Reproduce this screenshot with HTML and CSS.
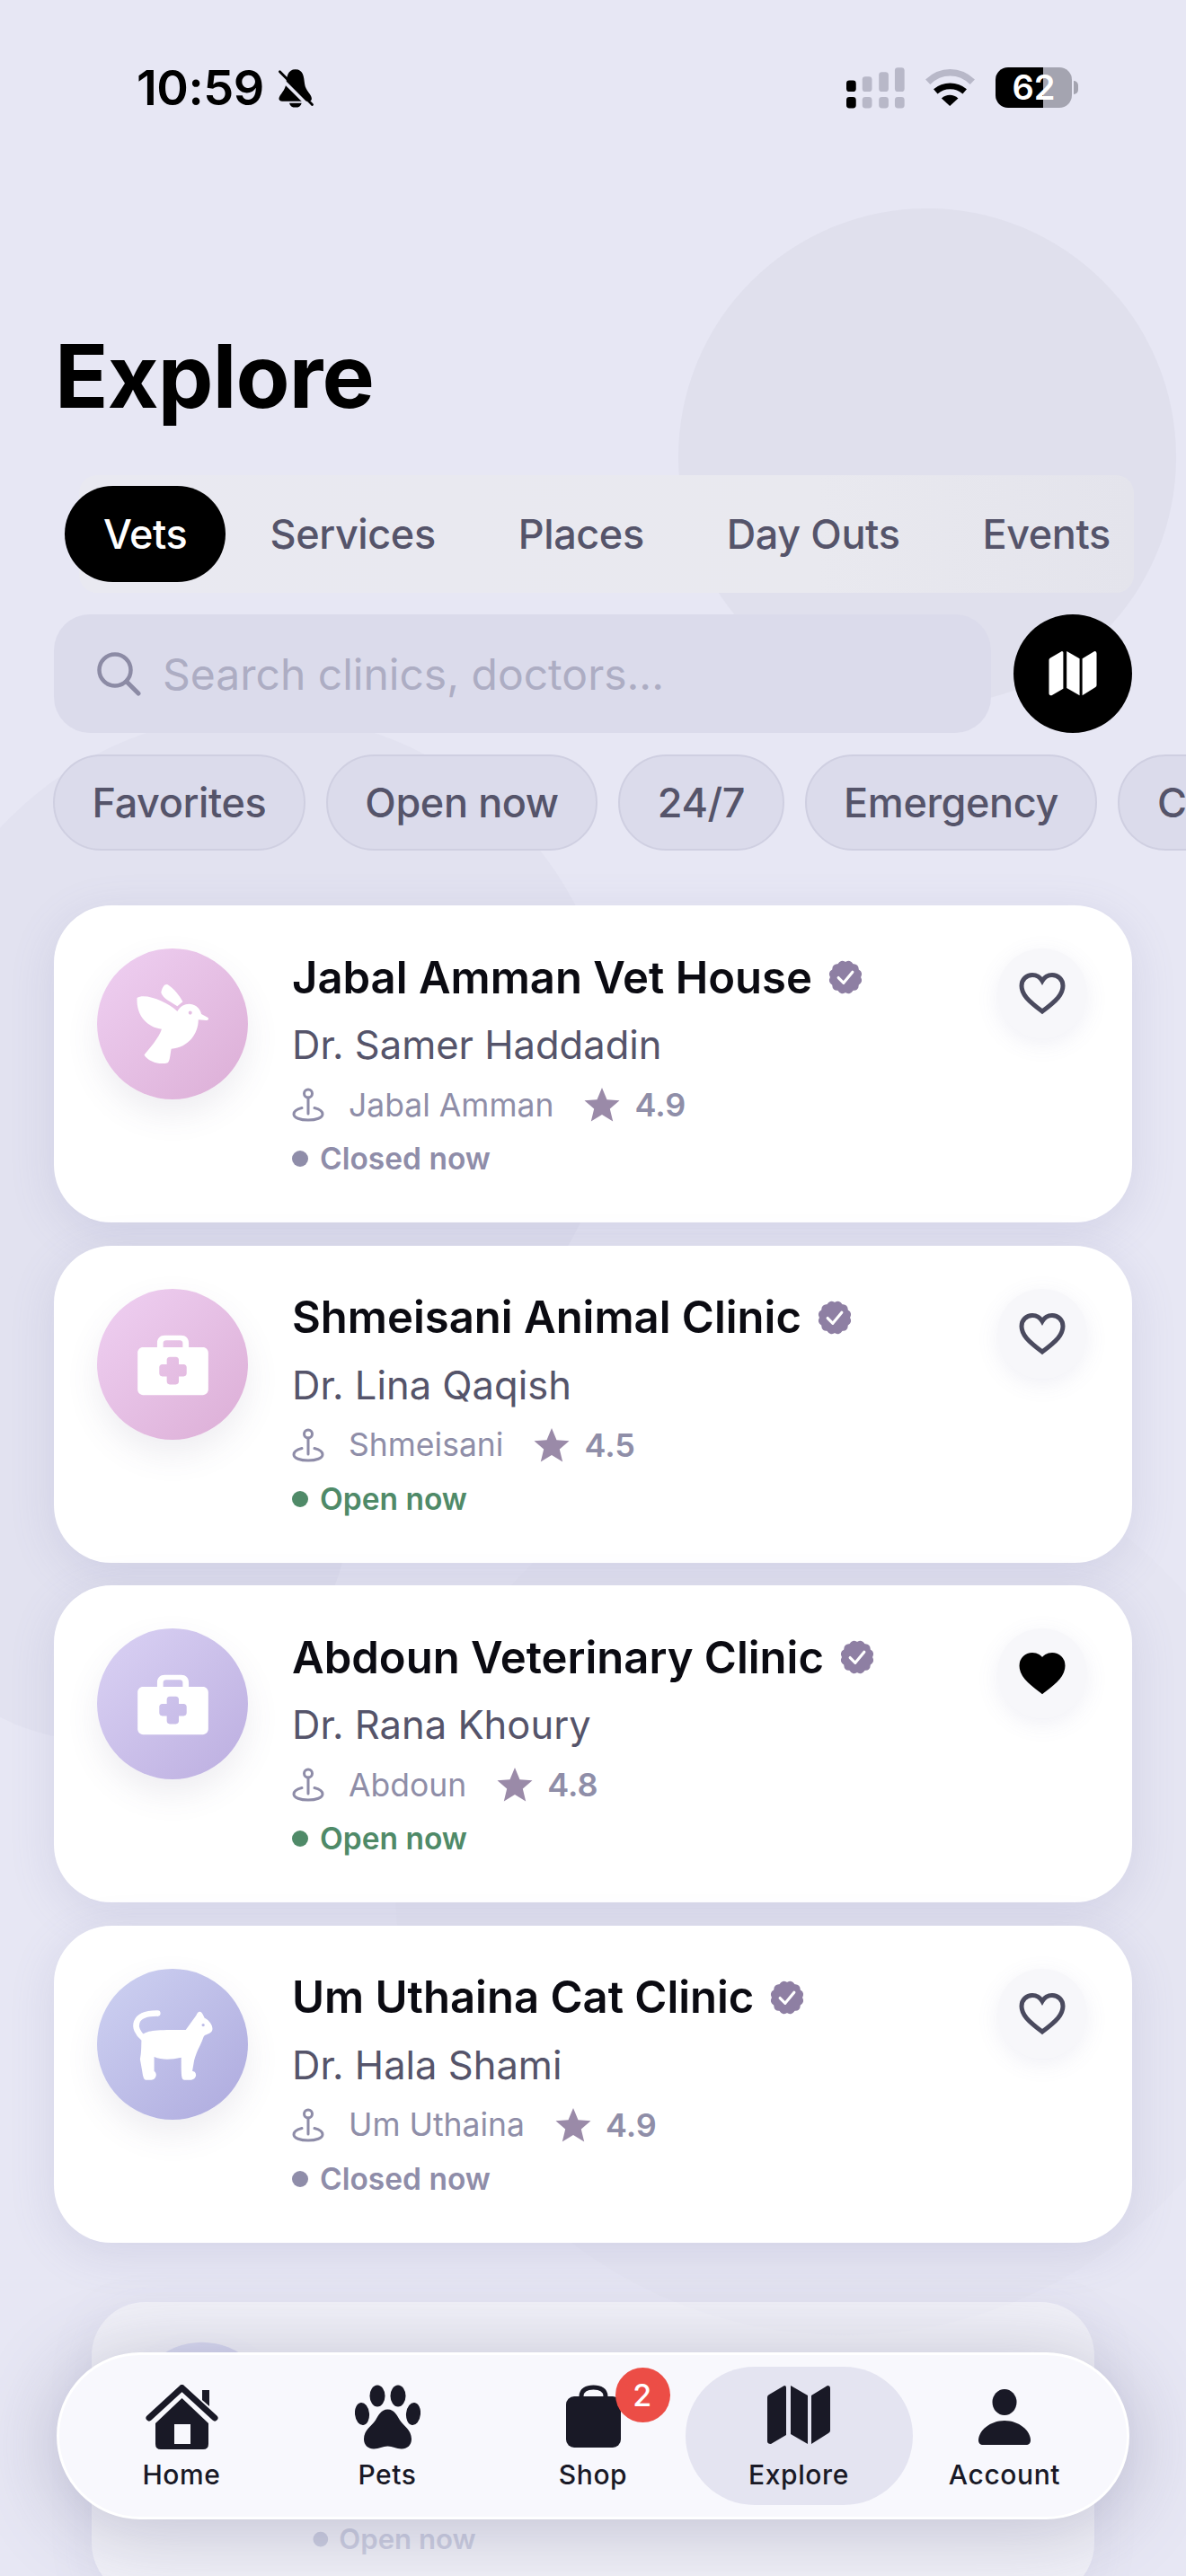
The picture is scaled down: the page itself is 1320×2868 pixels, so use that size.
FILE: index.html
```html
<!DOCTYPE html>
<html lang="en">
<head>
    <meta charset="UTF-8">
    <meta name="viewport" content="width=device-width, initial-scale=1.0">
    <title>Explore</title>
    <link rel="stylesheet" href="styles.css">
</head>
<body>
<div class="page">
    <div class="blob blob-top"></div>
    <div class="blob blob-left"></div>
    <div class="blob blob-low"></div>
    <div class="blob blob-right"></div>

    <svg width="0" height="0" class="defs">
        <defs>
            <symbol id="map" viewBox="0 0 70 66">
                <path d="M2 10 19 0Q21 0 21 2V55L4 65Q0 65 0 62V13Q0 11 2 10Z"/>
                <path d="M26 0 45 11V65L26 54Z"/>
                <path d="M49 11 67 0Q70 0 70 3V50Q70 52 68 53L49 65Z"/>
            </symbol>
            <symbol id="seal" viewBox="0 0 42 42">
                <g fill="#8e7fa3">
                    <rect x="7" y="7" width="28" height="28" rx="5"/>
                    <rect x="7" y="7" width="28" height="28" rx="5" transform="rotate(30 21 21)"/>
                    <rect x="7" y="7" width="28" height="28" rx="5" transform="rotate(60 21 21)"/>
                </g>
                <path d="M13.5 21.5 19 27 28.5 15.5" fill="none" stroke="#fff" stroke-width="3" stroke-linecap="round" stroke-linejoin="round"/>
            </symbol>
            <symbol id="pin" viewBox="0 0 36 38">
                <g fill="none" stroke="#8e8ca8" stroke-width="3" stroke-linecap="round">
                    <circle cx="18" cy="6.5" r="4.5"/>
                    <path d="M18 11V29"/>
                    <path d="M11 22.5C5 24 2 26.5 2 29.500C2 33.500 9 36 18 36S34 33.500 34 29.500C34 26.500 31 24 25 22.500"/>
                </g>
            </symbol>
            <symbol id="star" viewBox="0 0 40 38">
                <path fill="#9a8aa8" d="M20 0 25.500 13.300 39.500 14.300 28.800 23.500 32.200 37.500 20 29.900 7.800 37.500 11.200 23.500 .5 14.300 14.500 13.300Z"/>
            </symbol>
            <symbol id="heart" viewBox="0 0 52 48">
                <path d="M26 44C10 32 3 25 3 15.500 3 8.500 8.500 3.500 15 3.500 19.500 3.500 23.500 5.800 26 10 28.500 5.800 32.500 3.500 37 3.500 43.500 3.500 49 8.500 49 15.500 49 25 42 32 26 44Z"/>
            </symbol>
            <symbol id="bird" viewBox="55 48 502 502">
                <path fill="#fff" fill-rule="evenodd" d="M188 212C215 195 290 225 322 257 335 232 365 225 385 240 395 247 400 258 402 266L424 278C428 283 424 288 418 287L392 285C392 330 360 378 302 382 298 400 298 422 290 428 265 436 225 425 212 402 225 385 262 345 270 316 225 310 185 275 188 212ZM365 256A6 6 0 1 0 365 268 6 6 0 1 0 365 256Z"/>
                <path fill="#fff" d="M268 195C272 175 280 165 290 168 310 180 330 205 340 225L322 240C300 225 275 215 268 195Z"/>
            </symbol>
            <symbol id="kit" viewBox="55 42 502 502">
                <path fill="#fff" fill-rule="evenodd" d="M255 236V222C255 207 265 197 280 197H335C350 197 360 207 360 222V236H407C417 236 425 244 425 254V377C425 387 417 395 407 395H208C198 395 190 387 190 377V254C190 244 198 236 208 236ZM275 236H340V222C340 216 336 213 330 213H285C279 213 275 216 275 222ZM287 278V293H272C266 293 262 297 262 303V323C262 329 266 333 272 333H287V350C287 356 291 360 297 360H317C323 360 327 356 327 350V333H343C349 333 353 329 353 323V303C353 297 349 293 343 293H327V278C327 272 323 268 317 268H297C291 268 287 272 287 278Z"/>
            </symbol>
            <symbol id="cat" viewBox="55 65 502 502">
                <path fill="none" stroke="#fff" stroke-width="20" stroke-linecap="round" d="M208 294C172 265 172 212 256 213"/>
                <path fill="#fff" fill-rule="evenodd" d="M205 285C225 268 250 268 350 268L385 220C390 205 402 200 412 228 435 240 445 265 435 275 425 285 415 282 410 290 400 320 385 340 378 370L372 405 380 408C390 420 380 435 365 435H345C335 432 335 420 335 360 300 368 270 368 245 358V405C258 415 250 435 235 435H220C210 435 208 425 205 405L198 365C205 330 200 310 205 285ZM408 247A5 5 0 1 0 408 257 5 5 0 1 0 408 247Z"/>
            </symbol>
        </defs>
    </svg>

    <div class="status-bar">
        <div class="status-left">
            <span class="time">10:59</span>
            <svg class="bell" viewBox="555 40 135 145">
                <path d="M622 46C650 46 652 72 655 98 658 122 680 135 680 150 680 157 676 160 668 160H575C567 160 562 156 563 149 566 135 585 122 588 98 591 72 594 46 622 46Z"/>
                <path d="M600 166H644C642 176 634 182 622 182S602 176 600 166Z"/>
                <path d="M556 64 668 176" stroke="#e7e7f4" stroke-width="12"/>
                <path d="M566 54 682 172" stroke="#000" stroke-width="9" stroke-linecap="round"/>
            </svg>
        </div>
        <div class="status-right">
            <svg class="signal" viewBox="112 42 194 136">
                <g fill="#b8b8c8">
                    <rect x="165" y="72" width="32" height="50" rx="10"/>
                    <rect x="220" y="57" width="32" height="65" rx="10"/>
                    <rect x="273" y="42" width="32" height="80" rx="10"/>
                    <rect x="165" y="140" width="32" height="37" rx="10"/>
                    <rect x="220" y="140" width="32" height="37" rx="10"/>
                    <rect x="273" y="140" width="32" height="37" rx="10"/>
                </g>
                <rect x="112" y="85" width="32" height="37" rx="10"/>
                <rect x="112" y="140" width="32" height="37" rx="10"/>
            </svg>
            <svg class="wifi" viewBox="375 47 172 124">
                <path d="M386 90C430 48 492 48 536 90" fill="none" stroke="#b8b8c8" stroke-width="23"/>
                <path d="M412 122C440 98 482 98 510 122" fill="none" stroke="#000" stroke-width="21"/>
                <path d="M432 145C448 130 472 130 488 145L460 171Z"/>
            </svg>
            <div class="battery">62</div>
        </div>
    </div>

    <h1 class="title">Explore</h1>

    <div class="tabs">
        <div class="tab tab-active">Vets</div>
        <div class="tab">Services</div>
        <div class="tab">Places</div>
        <div class="tab">Day Outs</div>
        <div class="tab">Events</div>
    </div>

    <div class="search-row">
        <div class="search-box">
            <svg class="search-icon" viewBox="0 0 50 50">
                <circle cx="21" cy="21" r="17.500" fill="none" stroke="#8c8ba5" stroke-width="4.500"/>
                <path d="M34 34 47 47" stroke="#8c8ba5" stroke-width="5" stroke-linecap="round"/>
            </svg>
            <span class="search-text">Search clinics, doctors...</span>
        </div>
        <div class="map-btn"><svg class="map-icon"><use href="#map"/></svg></div>
    </div>

    <div class="chips">
        <div class="chip">Favorites</div>
        <div class="chip">Open now</div>
        <div class="chip">24/7</div>
        <div class="chip">Emergency</div>
        <div class="chip">Cats</div>
    </div>

    <div class="cards">
        <div class="card">
            <div class="avatar avatar-pink"><svg><use href="#bird"/></svg></div>
            <div class="card-body">
                <div class="card-title"><span>Jabal Amman Vet House</span><svg class="seal"><use href="#seal"/></svg></div>
                <div class="card-doctor">Dr. Samer Haddadin</div>
                <div class="card-meta">
                    <svg class="pin"><use href="#pin"/></svg><span class="place">Jabal Amman</span>
                    <svg class="star"><use href="#star"/></svg><span class="rating">4.9</span>
                </div>
                <div class="card-status closed">Closed now</div>
            </div>
            <div class="fav"><svg class="heart"><use href="#heart"/></svg></div>
        </div>

        <div class="card">
            <div class="avatar avatar-pink"><svg><use href="#kit"/></svg></div>
            <div class="card-body">
                <div class="card-title"><span>Shmeisani Animal Clinic</span><svg class="seal"><use href="#seal"/></svg></div>
                <div class="card-doctor">Dr. Lina Qaqish</div>
                <div class="card-meta">
                    <svg class="pin"><use href="#pin"/></svg><span class="place">Shmeisani</span>
                    <svg class="star"><use href="#star"/></svg><span class="rating">4.5</span>
                </div>
                <div class="card-status open">Open now</div>
            </div>
            <div class="fav"><svg class="heart"><use href="#heart"/></svg></div>
        </div>

        <div class="card">
            <div class="avatar avatar-violet"><svg><use href="#kit"/></svg></div>
            <div class="card-body">
                <div class="card-title"><span>Abdoun Veterinary Clinic</span><svg class="seal"><use href="#seal"/></svg></div>
                <div class="card-doctor">Dr. Rana Khoury</div>
                <div class="card-meta">
                    <svg class="pin"><use href="#pin"/></svg><span class="place">Abdoun</span>
                    <svg class="star"><use href="#star"/></svg><span class="rating">4.8</span>
                </div>
                <div class="card-status open">Open now</div>
            </div>
            <div class="fav"><svg class="heart heart-on"><use href="#heart"/></svg></div>
        </div>

        <div class="card">
            <div class="avatar avatar-blue"><svg><use href="#cat"/></svg></div>
            <div class="card-body">
                <div class="card-title"><span>Um Uthaina Cat Clinic</span><svg class="seal"><use href="#seal"/></svg></div>
                <div class="card-doctor">Dr. Hala Shami</div>
                <div class="card-meta">
                    <svg class="pin"><use href="#pin"/></svg><span class="place">Um Uthaina</span>
                    <svg class="star"><use href="#star"/></svg><span class="rating">4.9</span>
                </div>
                <div class="card-status closed">Closed now</div>
            </div>
            <div class="fav"><svg class="heart"><use href="#heart"/></svg></div>
        </div>

        <!-- next card, mostly under the nav -->
        <div class="card card-next">
            <div class="avatar avatar-blue"></div>
            <div class="card-body">
                <div class="card-status open">Open now</div>
            </div>
        </div>
    </div>

    <div class="nav">
        <div class="nav-item">
            <svg class="nav-icon home" viewBox="0 0 81 72">
                <path fill-rule="evenodd" d="M40.500 15 70 43V66Q70 72 64 72H17Q11 72 11 66V43ZM32 44V66H50V44Z"/>
                <path d="M63 6H71V24L63 17Z"/>
                <path d="M4 37 40.500 3.500 77 37" fill="none" stroke="#191926" stroke-width="7" stroke-linecap="round" stroke-linejoin="round"/>
            </svg>
            <span>Home</span>
        </div>
        <div class="nav-item">
            <svg class="nav-icon paw" viewBox="0 0 73 71">
                <ellipse cx="25" cy="12" rx="8.500" ry="12"/>
                <ellipse cx="48" cy="12" rx="8.500" ry="12"/>
                <ellipse cx="8" cy="32" rx="8" ry="12.500" transform="rotate(-6 8 32)"/>
                <ellipse cx="65" cy="32" rx="8" ry="12.500" transform="rotate(6 65 32)"/>
                <path d="M36.500 27C44 27 47 34 50 39 54 45 63 50 63 60 63 67 58 71 52 71 46 71 42 68 36.500 68S27 71 21 71C15 71 10 67 10 60 10 50 19 45 23 39 26 34 29 27 36.500 27Z"/>
            </svg>
            <span>Pets</span>
        </div>
        <div class="nav-item">
            <div class="bag-wrap">
                <svg class="nav-icon bag" viewBox="0 0 61 70">
                    <path d="M17 14V12C17 5 23 2 30.500 2S44 5 44 12V14" fill="none" stroke="#191926" stroke-width="5"/>
                    <rect x="0" y="12" width="61" height="57" rx="9"/>
                </svg>
                <div class="badge">2</div>
            </div>
            <span>Shop</span>
        </div>
        <div class="nav-item nav-active">
            <svg class="nav-icon map"><use href="#map"/></svg>
            <span>Explore</span>
        </div>
        <div class="nav-item">
            <svg class="nav-icon person" viewBox="0 0 58 62">
                <ellipse cx="29" cy="14.500" rx="13.500" ry="14.500"/>
                <path d="M29 35C45 35 58 46 58 57 58 60 56 62 53 62H5C2 62 0 60 0 57 0 46 13 35 29 35Z"/>
            </svg>
            <span>Account</span>
        </div>
    </div>
</div>
</body>
</html>
```

FILE: styles.css
```css
* {
    box-sizing: border-box;
}
html, body {
    margin: 0;
    padding: 0;
}
body {
    font-family: Inter, "Noto Sans", sans-serif;
    background-color: #e7e7f4;
    color: #000;
}
.page {
    position: relative;
    width: 1320px;
    height: 2868px;
    overflow: hidden;
    background-color: #e7e7f4;
}
.defs {
    position: absolute;
}

/* background shapes */
.blob {
    position: absolute;
    border-radius: 50%;
}
.blob-top {
    left: 755px;
    top: 232px;
    width: 554px;
    height: 554px;
    background-color: #e0e0ed;
}
.blob-left {
    left: -105px;
    top: 795px;
    width: 790px;
    height: 790px;
    background-color: #e2e2f0;
}
.blob-low {
    left: -150px;
    top: 1400px;
    width: 540px;
    height: 540px;
    background-color: #e2e2f0;
}
.blob-right {
    left: 440px;
    top: 1600px;
    width: 1000px;
    height: 1000px;
    background-color: #e5e5f2;
}

/* status bar */
.status-bar {
    position: relative;
    display: flex;
    justify-content: space-between;
    align-items: center;
    height: 77px;
    margin-top: 59px;
    padding: 0 127px 0 152px;
}
.status-left {
    display: flex;
    align-items: center;
    gap: 14px;
}
.time {
    font-size: 54px;
    font-weight: 600;
    line-height: 1;
    letter-spacing: -0.5px;
}
.bell {
    width: 42px;
    height: 46px;
}
.status-right {
    display: flex;
    align-items: center;
    gap: 22px;
}
.signal {
    width: 65px;
    height: 46px;
}
.wifi {
    width: 57px;
    height: 41px;
}
.battery {
    position: relative;
    width: 85px;
    height: 45px;
    border-radius: 14px;
    background: linear-gradient(90deg, #000 62%, #a4a4b0 62%);
    color: #fff;
    font-size: 38px;
    font-weight: 600;
    line-height: 45px;
    text-align: center;
}
.battery::after {
    content: "";
    position: absolute;
    left: 87px;
    top: 15px;
    width: 5px;
    height: 15px;
    border-radius: 0 6px 6px 0;
    background-color: #a4a4b0;
}

.title {
    position: relative;
    height: 116px;
    margin: 225px 0 0 61px;
    font-size: 98px;
    font-weight: 700;
    line-height: 116px;
    letter-spacing: -0.8px;
}

/* tabs */
.tabs {
    position: relative;
    display: flex;
    align-items: center;
    height: 131px;
    margin: 52px 58px 0 88px;
    border-radius: 20px;
    background: linear-gradient(90deg, #e9e9f1, #e9e9ef 70%, #e4e4ec);
    font-size: 45px;
    font-weight: 500;
    letter-spacing: -0.4px;
    color: #55546a;
}
.tab {
    flex: none;
    padding: 0 46px;
    white-space: nowrap;
}
.tab-active {
    display: flex;
    align-items: center;
    height: 107px;
    margin: 0 3px 0 -16px;
    padding: 0 43px;
    border-radius: 54px;
    background-color: #000;
    color: #fff;
}

/* search */
.search-row {
    position: relative;
    display: flex;
    gap: 25px;
    margin: 24px 60px 0;
}
.search-box {
    flex: 1;
    display: flex;
    align-items: center;
    gap: 24px;
    height: 132px;
    padding-left: 47px;
    border-radius: 40px;
    background-color: #dbdbeb;
}
.search-icon {
    width: 50px;
    height: 50px;
}
.search-text {
    font-size: 48px;
    color: #adadc3;
}
.map-btn {
    display: flex;
    align-items: center;
    justify-content: center;
    width: 132px;
    height: 132px;
    border-radius: 50%;
    background-color: #000;
}
.map-icon {
    width: 54px;
    height: 50px;
    fill: #fff;
}

/* filter chips */
.chips {
    position: relative;
    display: flex;
    gap: 23px;
    margin: 24px 0 0 59px;
}
.chip {
    flex: none;
    display: flex;
    align-items: center;
    height: 107px;
    padding: 0 41.5px;
    border: 2px solid #cfcfe1;
    border-radius: 54px;
    background-color: #dbdbeb;
    font-size: 45px;
    font-weight: 500;
    letter-spacing: -0.4px;
    color: #55546a;
}

/* clinic cards */
.cards {
    position: relative;
    display: flex;
    flex-direction: column;
    gap: 25.5px;
    margin: 61px 60px 0;
}
.card {
    display: flex;
    height: 353px;
    padding: 48px 50px 0 48px;
    border-radius: 64px;
    background-color: #fff;
    box-shadow: 0 12px 50px rgba(110, 110, 170, 0.16);
}
.avatar {
    flex: none;
    width: 168px;
    height: 168px;
    border-radius: 50%;
    box-shadow: 0 16px 36px rgba(90, 80, 120, 0.1);
}
.avatar svg {
    display: block;
    width: 168px;
    height: 168px;
}
.avatar-pink {
    background: linear-gradient(135deg, #efd0f2, #dcaed6);
}
.avatar-violet {
    background: linear-gradient(135deg, #dad2f4, #bcaee0);
}
.avatar-blue {
    background: linear-gradient(135deg, #ced2f2, #aeaade);
}
.card-body {
    flex: 1;
    margin-left: 49px;
    min-width: 0;
}
.card-title {
    display: flex;
    align-items: center;
    gap: 15px;
    height: 62px;
    margin-top: 1px;
    font-size: 49px;
    font-weight: 600;
    color: #0b0b12;
    white-space: nowrap;
}
.seal {
    width: 44px;
    height: 44px;
}
.card-doctor {
    margin-top: 13px;
    font-size: 43.5px;
    line-height: 62px;
    color: #55546a;
}
.card-meta {
    display: flex;
    align-items: center;
    height: 46px;
    margin-top: 13px;
    font-size: 35.5px;
    color: #8f8ea8;
}
.pin {
    width: 36px;
    height: 38px;
    margin-right: 27px;
}
.star {
    width: 40px;
    height: 38px;
    margin: 0 16px 0 34px;
}
.rating {
    font-size: 36px;
    font-weight: 600;
}
.card-status {
    display: flex;
    align-items: center;
    gap: 13px;
    height: 40px;
    margin-top: 17px;
    font-size: 33.5px;
    font-weight: 600;
}
.card-status::before {
    content: "";
    width: 18px;
    height: 18px;
    border-radius: 50%;
    background-color: currentColor;
}
.closed {
    color: #8f8da9;
}
.open {
    color: #4f8a68;
}
.fav {
    flex: none;
    display: flex;
    align-items: center;
    justify-content: center;
    width: 100px;
    height: 100px;
    border-radius: 50%;
    background-color: #f7f7fa;
    box-shadow: 0 6px 24px rgba(110, 110, 170, 0.1);
}
.heart {
    width: 52px;
    height: 48px;
    fill: none;
    stroke: #4a4a5e;
    stroke-width: 5;
}
.heart-on {
    fill: #000;
    stroke: #000;
}
.card-next {
    margin-top: 41px;
    transform: scale(0.93);
    transform-origin: top center;
    opacity: 0.42;
}
.card-next .card-status {
    margin-top: 216px;
    color: #aab0c8;
}

/* bottom nav */
.nav {
    position: absolute;
    left: 63px;
    top: 2619px;
    isolation: isolate;
    display: flex;
    width: 1194px;
    height: 186px;
    padding: 13px 21.5px;
    border: 3px solid #fff;
    border-radius: 93px;
    background-color: #f8f8fd;
    box-shadow: 0 10px 90px rgba(80, 80, 120, 0.32);
}
.nav-item {
    position: relative;
    flex: 1;
    display: flex;
    flex-direction: column;
    align-items: center;
    padding-top: 20px;
    font-size: 30px;
    font-weight: 500;
    letter-spacing: 0.6px;
    color: #191926;
}
.nav-item span {
    margin-top: 10px;
    line-height: 36px;
}
.nav-active::before {
    content: "";
    position: absolute;
    z-index: -1;
    top: 0;
    bottom: 0;
    left: -12px;
    right: -12px;
    border-radius: 80px;
    background-color: #e4e4f1;
}
.nav-icon {
    display: block;
    height: 72px;
    fill: #191926;
}
.home {
    width: 81px;
}
.paw {
    width: 73px;
}
.bag-wrap {
    position: relative;
    height: 72px;
}
.bag {
    width: 61px;
}
.map {
    width: 70px;
    height: 68px;
    margin-bottom: 4px;
}
.person {
    width: 58px;
    height: 62px;
    margin: 5px 0;
}
.badge {
    position: absolute;
    left: 55px;
    top: -19px;
    width: 61px;
    height: 61px;
    border-radius: 50%;
    background-color: #ec4d46;
    color: #fff;
    font-size: 34px;
    line-height: 61px;
    text-align: center;
}
```
